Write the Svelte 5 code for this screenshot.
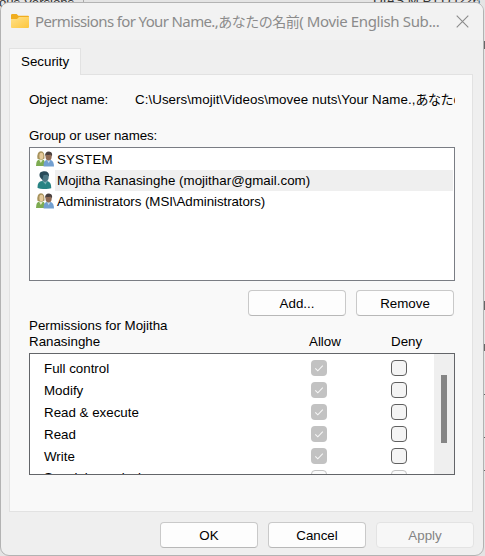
<script>
  const users = [
    { name: 'SYSTEM', kind: 'group', ls: 0.15 },
    { name: 'Mojitha Ranasinghe (mojithar@gmail.com)', kind: 'user', selected: true, ls: 0.03 },
    { name: 'Administrators (MSI\\Administrators)', kind: 'group', ls: -0.06 }
  ];
  const permissions = [
    { name: 'Full control', allow: true },
    { name: 'Modify', allow: true },
    { name: 'Read & execute', allow: true },
    { name: 'Read', allow: true },
    { name: 'Write', allow: true },
    { name: 'Special permissions', allow: false, faded: true }
  ];
</script>

<div class="desktop">
  <span class="behind b1">ous Versions</span>
  <span class="behind b2">DIAS M.P.I D.I226</span>
  <i class="seam s1"></i><i class="seam s2"></i>
  <i class="mark m1"></i><i class="mark m2"></i><i class="mark m3"></i><i class="mark m4"></i>
  <i class="mark r1"></i><i class="mark r2"></i><i class="mark r3"></i><i class="mark r4"></i><i class="mark r5"></i><i class="mark r6"></i>
  <div class="dialog">
    <header>
      <svg class="folder" width="18" height="14" viewBox="0 0 18 14">
        <defs><linearGradient id="fg" x1="0" y1="0" x2="1" y2="1"><stop offset="0" stop-color="#ffe18a" /><stop offset="1" stop-color="#fdc63c" /></linearGradient></defs>
        <path d="M0 1.2Q0 0 1.2 0H5.6L7.4 1.8H17Q18 1.8 18 3V12H0Z" fill="#f0ad1e" />
        <path d="M0 5H6L8 3H18V13Q18 14 17 14H1Q0 14 0 13Z" fill="url(#fg)" />
      </svg>
      <h1>Permissions for Your Name.,<b>あなたの名前</b><span>( Movie English Sub...</span></h1>
      <svg class="close" width="13" height="13" viewBox="0 0 13 13"><path d="M.7 .7L12.3 12.3M12.3 .7L.7 12.3" stroke="#8b8b8b" stroke-width="1.1" /></svg>
    </header>
    <div class="tab">Security</div>
    <section class="panel">
      <div class="object"><span class="label">Object name:</span><span class="path">C:\Users\mojit\Videos\movee nuts\Your Name.,<b>あなたの</b></span></div>
      <div class="caption">Group or user names:</div>
      <div class="list">
        {#each users as u}
          <div class="user">
            {#if u.kind === 'group'}
              <svg width="18" height="16" viewBox="0 0 18 16">
                <path d="M0 15Q0 9 3.5 8.2L8 9L10 15Z" fill="#7dab51" />
                <path d="M3 8.5L4.8 12L7 8.5Z" fill="#e7edcf" />
                <path d="M1.4 7.7Q0.7 .4 5 .2Q9 .4 8.5 7.4L6 8.7Z" fill="#a8935c" />
                <ellipse cx="5.4" cy="5" rx="2" ry="3.2" fill="#e6cb9c" />
                <path d="M7.6 15.5Q7.2 10 10.5 9L15 9Q18 10.4 18 15.5Z" fill="#729fd0" />
                <path d="M11 9L12.7 12.2L14.4 9Z" fill="#c5dbef" />
                <ellipse cx="12.6" cy="5.4" rx="3.1" ry="4.1" fill="#8f6b55" />
                <path d="M9.2 5Q8.8 .4 13 .4Q16.8 .7 16 5.2L14.4 3.4Q12 4.4 10.4 3.7Z" fill="#493f3d" />
              </svg>
            {:else}
              <svg width="18" height="18" viewBox="0 0 18 18">
                <path d="M1.6 17Q1 10.8 6 10L11 10Q15.5 11 15.2 17.2Q8 19 1.6 17Z" fill="#288383" />
                <path d="M6.4 10L9.6 13.5L11.3 10Z" fill="#79b2b4" />
                <ellipse cx="9" cy="6" rx="3.7" ry="4.9" fill="#4d7885" />
                <path d="M3.8 5.7Q2.3 .8 7.5 .2Q13.5 -.4 13 5.7L11.5 3.7L7.6 4L6.4 8.4Q4.5 7.4 3.8 5.7Z" fill="#294b59" />
              </svg>
            {/if}
            <span class:selected={u.selected} style:letter-spacing="{u.ls}px">{u.name}</span>
          </div>
        {/each}
      </div>
      <div class="actions"><button>Add...</button><button>Remove</button></div>
      <div class="permhead"><span class="who">Permissions for Mojitha<br />Ranasinghe</span><span class="allow">Allow</span><span class="deny">Deny</span></div>
      <div class="perms">
        <div class="rows">
          {#each permissions as p}
            <div class="perm">
              <span class="pname">{p.name}</span>
              <span class="check" class:on={p.allow} class:faded={p.faded}>
                {#if p.allow}<svg width="16" height="16" viewBox="0 0 16 16"><path d="M4.3 8.4L6.8 10.8L11.8 5.6" fill="none" stroke="#f7f7f7" stroke-width="1.1" /></svg>{/if}
              </span>
              <span class="check" class:faded={p.faded}></span>
            </div>
          {/each}
        </div>
        <div class="scroll"><i></i></div>
      </div>
    </section>
    <footer><button>OK</button><button>Cancel</button><button class="off">Apply</button></footer>
  </div>
</div>

<style>
  :global(body) { margin: 0; }
  .desktop, .desktop * { box-sizing: border-box; }
  .desktop { position: relative; width: 485px; height: 556px; overflow: hidden; background: #e4e4e4; padding: 2px 1px 0 0; font: 13.33px/16px "Liberation Sans", Arial, "Noto Sans CJK JP", sans-serif; color: #000; white-space: nowrap; }
  .behind { position: absolute; color: #333; }
  .b1 { left: -1px; top: -5px; letter-spacing: -.1px; }
  .b2 { left: 373px; top: -7px; }
  .seam { position: absolute; top: 0; width: 1px; height: 3px; background: #aaa; }
  .s1 { left: 83px; } .s2 { left: 478px; }
  .mark { position: absolute; left: 0; width: 1px; height: 2px; background: #666; }
  .m1 { top: 37px; height: 5px; background: #3f77a5; }
  .m2 { top: 118px; height: 6px; background: #a65d3b; }
  .m3 { top: 143px; }
  .m4 { top: 446px; height: 4px; background: #3f8fb5; }
  .r1, .r2, .r3, .r4, .r5, .r6 { left: 484px; width: 1px; }
  .r1 { top: 41px; height: 8px; } .r2 { top: 301px; height: 9px; } .r3 { top: 344px; height: 7px; }
  .r4 { top: 394px; height: 1px; } .r5 { top: 437px; height: 1px; } .r6 { top: 470px; height: 1px; }
  .dialog { position: relative; width: 484px; height: 554px; border: 1px solid #b3b3b3; border-radius: 9px; background: #efefef; padding-left: 8px; overflow: hidden; }
  header { margin-left: -8px; height: 37px; background: #f2f2f2; display: flex; align-items: flex-start; padding-left: 10px; }
  .folder { flex: none; margin-top: 11px; }
  h1 { flex: none; width: 412px; margin: 7px 0 0 6px; font: 15px/22px "Noto Sans", "Open Sans", sans-serif; letter-spacing: -.63px; color: #8b8b8b; }
  h1 b { font: 14px/22px "Noto Sans CJK JP", sans-serif; letter-spacing: -.5px; }
  h1 span { letter-spacing: -.37px; }
  .close { flex: none; margin: 12px 0 0 9px; }
  .tab { position: relative; z-index: 1; width: 72px; height: 27px; margin-top: 8px; border: 1px solid #e2e2e2; border-bottom: 0; background: #f9f9f9; padding: 5px 0 0 11px; }
  .panel { width: 464px; height: 438px; margin-top: -1px; border: 1px solid #e2e2e2; background: #f9f9f9; padding: 16px 17px 0 19px; }
  .object { display: flex; height: 20px; line-height: 18px; }
  .label { width: 106px; }
  .path { width: 320px; overflow: hidden; letter-spacing: .06px; }
  .path b { font: 13px/16px "Noto Sans CJK JP", sans-serif; letter-spacing: -.5px; }
  .caption { margin-top: 17px; height: 19px; line-height: 16px; letter-spacing: -.07px; }
  .list { width: 426px; height: 134px; border: 1px solid #7a7d84; background: #fff; padding: 1px 1px 0 6px; }
  .user { display: flex; height: 21px; align-items: center; }
  .user svg { flex: none; margin-right: 1px; margin-top: -2px; }
  .user span { flex: 1; height: 21px; line-height: 21px; padding-left: 2px; }
  .selected { background: #efefef; }
  .actions { display: flex; gap: 10px; justify-content: flex-end; margin-top: 9px; padding-right: 1px; }
  button { width: 98px; height: 26px; border: 1px solid #c9c9c9; border-bottom-color: #b8b8b8; border-radius: 4px; background: #fdfdfd; padding: 1px 0 0; font: inherit; color: #000; }
  .permhead { display: flex; align-items: flex-end; height: 34px; margin-bottom: 3px; }
  .who { width: 280px; }
  .allow { width: 82px; }
  .perms { width: 426px; height: 122px; border: 1px solid #636569; background: #fff; display: flex; overflow: hidden; }
  .rows { width: 404px; flex: none; padding-top: 3px; }
  .perm { display: flex; height: 22px; align-items: center; padding-left: 14px; }
  .pname { width: 267px; flex: none; padding-top: 1px; }
  .perm:last-child .pname { padding: 0 0 1px; }
  .check { width: 16px; height: 16px; border: 1px solid #5f5f5f; border-radius: 4px; background: #f4f4f4; margin-right: 64px; flex: none; }
  .check + .check { margin-right: 0; }
  .check.on { border: 0; background: #c2c2c2; }
  .check svg { display: block; }
  .check.faded { border-color: #c2c2c2; background: #fbfbfb; }
  .scroll { width: 20px; flex: none; background: #efefef; padding: 21px 0 0 7px; }
  .scroll i { display: block; width: 6px; height: 68px; background: #858585; }
  footer { display: flex; gap: 10px; padding: 10px 0 0 151px; }
  .off { border-color: #e3e3e3; background: #f7f7f7; color: #848484; }
</style>
